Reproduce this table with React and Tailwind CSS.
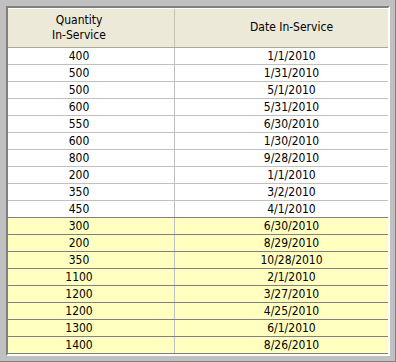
import React from "react";

const rows = [
  { qty: "400", date: "1/1/2010" },
  { qty: "500", date: "1/31/2010" },
  { qty: "500", date: "5/1/2010" },
  { qty: "600", date: "5/31/2010" },
  { qty: "550", date: "6/30/2010" },
  { qty: "600", date: "1/30/2010" },
  { qty: "800", date: "9/28/2010" },
  { qty: "200", date: "1/1/2010" },
  { qty: "350", date: "3/2/2010" },
  { qty: "450", date: "4/1/2010" },
  { qty: "300", date: "6/30/2010", flagged: true },
  { qty: "200", date: "8/29/2010", flagged: true },
  { qty: "350", date: "10/28/2010", flagged: true },
  { qty: "1100", date: "2/1/2010", flagged: true },
  { qty: "1200", date: "3/27/2010", flagged: true },
  { qty: "1200", date: "4/25/2010", flagged: true },
  { qty: "1300", date: "6/1/2010", flagged: true },
  { qty: "1400", date: "8/26/2010", flagged: true },
];

function Row({ row, darkLine }) {
  return (
    <div
      className={`flex h-[17px] border-b ${darkLine ? "border-[#808080]" : "border-[#c0c0c0]"} ${
        row.flagged ? "bg-[#ffffc0]" : "bg-white"
      }`}
    >
      <div className="w-[167px] shrink-0 border-r border-[#c0c0c0] flex items-center justify-center pr-[24px] leading-[16px]">
        {row.qty}
      </div>
      <div className="flex-1 flex items-center justify-center pl-[20px] leading-[16px]">
        {row.date}
      </div>
    </div>
  );
}

export default function App() {
  return (
    <div
      className="w-[396px] h-[362px] bg-[#c0c0c0] border-r border-b border-[#808080] pt-[6px] pl-[6px] pr-[5px] pb-[5px] text-[12px] text-black"
      style={{ fontFamily: '"DejaVu Sans Condensed", "DejaVu Sans", sans-serif' }}
    >
      <div className="h-full border-t-2 border-l-2 border-[#808080] border-r-2 border-b-2 border-r-white border-b-white bg-white">
        <div className="flex h-[40px] bg-[#ece9d8] border-t border-white border-b border-b-[#aca899]">
          <div className="w-[167px] shrink-0 border-r border-[#c5c2b2] flex flex-col items-center justify-center pr-[24px] leading-[15px] pb-[1px]">
            <span>Quantity</span>
            <span>In-Service</span>
          </div>
          <div className="flex-1 flex items-center justify-center pl-[20px] leading-[15px] pb-[2px]">
            Date In-Service
          </div>
        </div>
        {rows.map((row, i) => (
          <Row key={i} row={row} darkLine={i >= 9} />
        ))}
      </div>
    </div>
  );
}
